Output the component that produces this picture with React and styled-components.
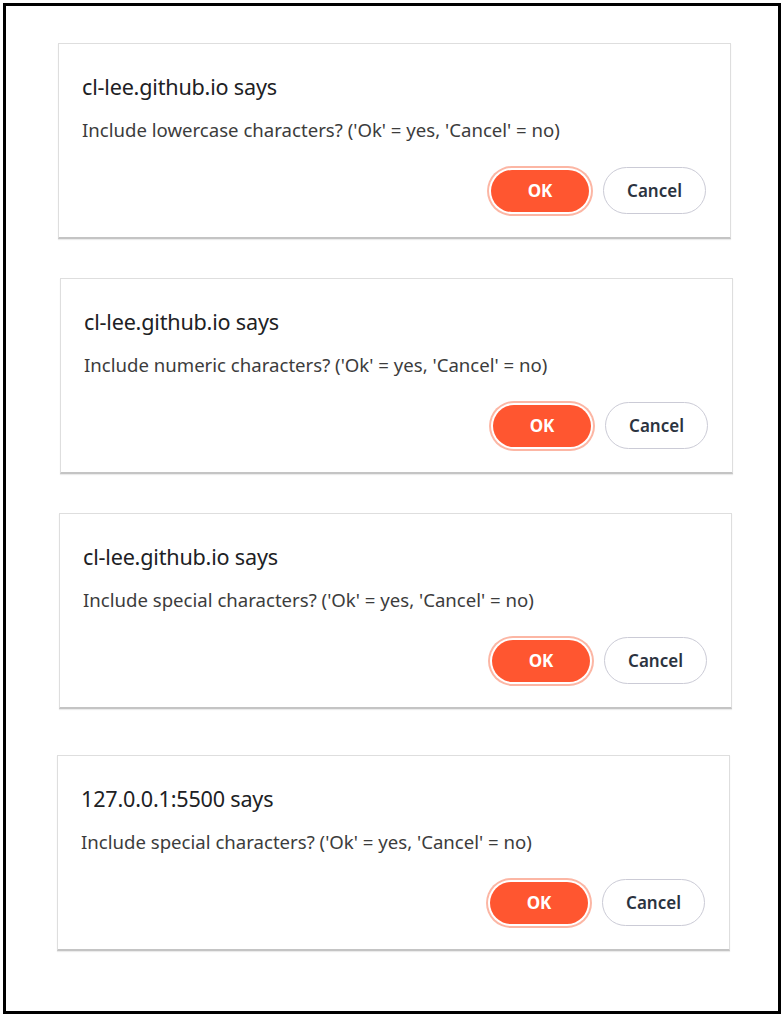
import React from "react";
import styled, { createGlobalStyle } from "styled-components";

const GlobalStyle = createGlobalStyle`
  html, body {
    margin: 0;
    padding: 0;
    background: #ffffff;
  }
  body {
    font-family: "Segoe UI", "Noto Sans", "Open Sans", sans-serif;
  }
`;

const Frame = styled.div`
  box-sizing: border-box;
  width: 778px;
  height: 1011px;
  margin: 3px;
  border: 3px solid #000;
  display: flex;
  flex-direction: column;
`;

const Dialog = styled.div`
  box-sizing: border-box;
  width: 673px;
  height: 196px;
  margin-top: ${(p) => p.$top}px;
  margin-left: ${(p) => p.$left}px;
  padding: 29px 24px 23px 23px;
  background: #fff;
  border: 1px solid #dedede;
  border-bottom: 2px solid #c4c4c4;
  box-shadow: 0 1px 1px rgba(0, 0, 0, 0.08);
  display: flex;
  flex-direction: column;
`;

const Title = styled.div`
  font-size: 21.6px;
  line-height: 28px;
  color: #202124;
  letter-spacing: -0.2px;
`;

const Message = styled.div`
  margin-top: 16px;
  font-size: 18.6px;
  line-height: 26px;
  color: #3c3c3c;
`;

const Actions = styled.div`
  margin-top: auto;
  display: flex;
  justify-content: flex-end;
  align-items: center;
  gap: 14px;
`;

const OkButton = styled.button`
  box-sizing: border-box;
  width: 98px;
  height: 42px;
  border: none;
  border-radius: 21px;
  background: #ff5630;
  color: #fff;
  font-family: inherit;
  font-weight: 700;
  font-size: 17px;
  box-shadow: 0 0 0 2px #fff, 0 0 0 4px #fcb6a4;
  cursor: pointer;
`;

const CancelButton = styled.button`
  box-sizing: border-box;
  width: 103px;
  height: 47px;
  border: 1px solid #cbcbd6;
  border-radius: 24px;
  background: #fff;
  color: #2b3340;
  font-family: inherit;
  font-weight: 600;
  font-size: 17px;
  cursor: pointer;
`;

const dialogs = [
  { host: "cl-lee.github.io", kind: "lowercase", top: 37, left: 52 },
  { host: "cl-lee.github.io", kind: "numeric", top: 39, left: 54 },
  { host: "cl-lee.github.io", kind: "special", top: 39, left: 53 },
  { host: "127.0.0.1:5500", kind: "special", top: 46, left: 51 },
];

export default function App() {
  return (
    <>
      <GlobalStyle />
      <Frame>
        {dialogs.map((d, i) => (
          <Dialog key={i} $top={d.top} $left={d.left}>
            <Title>{d.host} says</Title>
            <Message>
              Include {d.kind} characters? ('Ok' = yes, 'Cancel' = no)
            </Message>
            <Actions>
              <OkButton>OK</OkButton>
              <CancelButton>Cancel</CancelButton>
            </Actions>
          </Dialog>
        ))}
      </Frame>
    </>
  );
}
